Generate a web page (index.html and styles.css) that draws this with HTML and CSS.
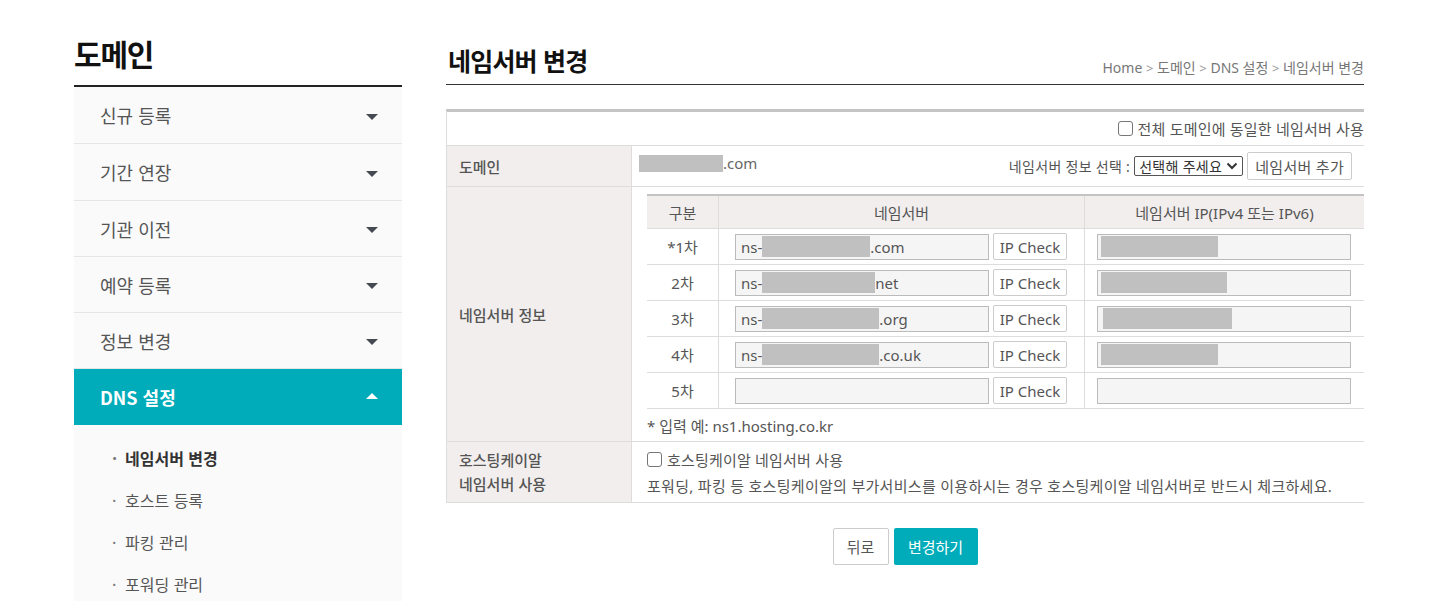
FILE: index.html
```html
<!DOCTYPE html>
<html lang="ko">
<head>
<meta charset="utf-8">
<title>네임서버 변경</title>
<link rel="stylesheet" href="styles.css">
</head>
<body>
<div class="page">
  <aside class="side">
    <h2 class="side-title">도메인</h2>
    <ul class="menu">
      <li class="menu-item tall"><span>신규 등록</span><i class="tri down"></i></li>
      <li class="menu-item tall"><span>기간 연장</span><i class="tri down"></i></li>
      <li class="menu-item"><span>기관 이전</span><i class="tri down"></i></li>
      <li class="menu-item"><span>예약 등록</span><i class="tri down"></i></li>
      <li class="menu-item"><span>정보 변경</span><i class="tri down"></i></li>
      <li class="menu-item active"><span>DNS 설정</span><i class="tri up"></i></li>
    </ul>
    <ul class="submenu">
      <li class="sub-item current">네임서버 변경</li>
      <li class="sub-item">호스트 등록</li>
      <li class="sub-item">파킹 관리</li>
      <li class="sub-item">포워딩 관리</li>
    </ul>
  </aside>
  <main class="main">
    <div class="head">
      <h1 class="title">네임서버 변경</h1>
      <div class="crumb">Home <span class="gt">&gt;</span> 도메인 <span class="gt">&gt;</span> DNS 설정 <span class="gt">&gt;</span> 네임서버 변경</div>
    </div>
    <div class="form">
      <div class="row-all">
        <label class="chk"><span class="box"></span>전체 도메인에 동일한 네임서버 사용</label>
      </div>
      <div class="row">
        <div class="lbl">도메인</div>
        <div class="val val-domain">
          <div class="dom"><span class="mask" style="width:84px"></span>.com</div>
          <div class="dom-tools">
            <span class="sel-lbl">네임서버 정보 선택 :</span>
            <span class="select">선택해 주세요 <svg width="12" height="8" viewBox="0 0 12 8"><path d="M1.5 1.5 L6 6 L10.5 1.5" fill="none" stroke="#333" stroke-width="2"/></svg></span>
            <span class="btn-add">네임서버 추가</span>
          </div>
        </div>
      </div>
      <div class="row">
        <div class="lbl lbl-mid">네임서버 정보</div>
        <div class="val val-ns">
          <div class="ns-table">
            <div class="th c1">구분</div>
            <div class="th c2">네임서버</div>
            <div class="th c3">네임서버 IP(IPv4 또는 IPv6)</div>

            <div class="td c1">*1차</div>
            <div class="td c2"><span class="inp">ns-<span class="mask" style="width:108px"></span>.com</span><span class="ipchk">IP Check</span></div>
            <div class="td c3"><span class="inp ip"><span class="mask m-ip" style="width:117px"></span></span></div>

            <div class="td c1">2차</div>
            <div class="td c2"><span class="inp">ns-<span class="mask" style="width:113px"></span>net</span><span class="ipchk">IP Check</span></div>
            <div class="td c3"><span class="inp ip"><span class="mask m-ip" style="width:126px"></span></span></div>

            <div class="td c1">3차</div>
            <div class="td c2"><span class="inp">ns-<span class="mask" style="width:117px"></span>.org</span><span class="ipchk">IP Check</span></div>
            <div class="td c3"><span class="inp ip"><span class="mask m-ip m-ip3" style="width:129px"></span></span></div>

            <div class="td c1">4차</div>
            <div class="td c2"><span class="inp">ns-<span class="mask" style="width:117px"></span>.co.uk</span><span class="ipchk">IP Check</span></div>
            <div class="td c3"><span class="inp ip"><span class="mask m-ip" style="width:117px"></span></span></div>

            <div class="td c1">5차</div>
            <div class="td c2"><span class="inp"></span><span class="ipchk">IP Check</span></div>
            <div class="td c3"><span class="inp ip"></span></div>
          </div>
          <p class="note">* 입력 예: ns1.hosting.co.kr</p>
        </div>
      </div>
      <div class="row">
        <div class="lbl lbl-two">호스팅케이알<br>네임서버 사용</div>
        <div class="val val-host">
          <label class="chk"><span class="box"></span>호스팅케이알 네임서버 사용</label>
          <p class="desc">포워딩, 파킹 등 호스팅케이알의 부가서비스를 이용하시는 경우 호스팅케이알 네임서버로 반드시 체크하세요.</p>
        </div>
      </div>
    </div>
    <div class="actions">
      <span class="btn back">뒤로</span>
      <span class="btn submit">변경하기</span>
    </div>
  </main>
</div>
</body>
</html>
```

FILE: styles.css
```css
* { box-sizing: border-box; }
html, body { margin: 0; padding: 0; background: #fff; }
body {
  font-family: "Noto Sans", "Noto Sans CJK KR", sans-serif;
  color: #555;
  font-size: 15px;
}
.page {
  display: flex;
  gap: 44px;
  padding-left: 74px;
  width: 1440px;
  height: 601px;
  overflow: hidden;
}
/* sidebar */
.side { width: 328px; flex: none; }
.side-title {
  margin: 0;
  padding-top: 32px;
  height: 87px;
  font-size: 30px;
  font-weight: 700;
  color: #111;
  line-height: 42px;
  letter-spacing: -1.2px;
  border-bottom: 2px solid #222;
  font-family: "Noto Sans CJK KR", sans-serif;
}
.menu, .submenu { list-style: none; margin: 0; padding: 0; }
.menu-item {
  height: 56px;
  background: #fafafa;
  border-bottom: 1px solid #e5e5e5;
  display: flex;
  align-items: center;
  justify-content: space-between;
  padding: 0 24px 0 26px;
  font-size: 18px;
  color: #555;
  font-family: "Noto Sans CJK KR", sans-serif;
}
.menu-item.tall { height: 57px; }
.menu-item.active {
  background: #00acb9;
  color: #fff;
  font-weight: 700;
  border-bottom: none;
  height: 56px;
}
.tri { display: block; width: 0; height: 0; border-left: 6px solid transparent; border-right: 6px solid transparent; }
.tri.down { border-top: 6px solid #454a52; margin-top: 3px; }
.tri.up { border-bottom: 6px solid #fff; margin-bottom: 3px; }
.submenu { background: #fafafa; padding-top: 19px; height: 200px; }
.sub-item {
  height: 42px;
  line-height: 28px;
  font-size: 16px;
  color: #555;
  padding-left: 51px;
  position: relative;
  font-family: "Noto Sans CJK KR", sans-serif;
}
.sub-item::before {
  content: "·";
  position: absolute;
  left: 38px;
  top: 0;
  color: #777;
}
.sub-item.current { font-weight: 700; color: #333; }

/* main */
.main { width: 918px; flex: none; }
.head {
  display: flex;
  justify-content: space-between;
  align-items: flex-end;
  height: 85px;
  border-bottom: 1px solid #333;
  padding-bottom: 6px;
}
.title {
  margin: 0 0 0 2px;
  font-size: 25px;
  font-weight: 700;
  color: #111;
  line-height: 36px;
  letter-spacing: -0.8px;
  font-family: "Noto Sans CJK KR", sans-serif;
}
.crumb { font-size: 14px; color: #777; line-height: 20px; padding-bottom: 0; }
.gt { color: #999; font-size: 13px; }

.form {
  margin-top: 24px;
  border-top: 3px solid #c4c4c4;
  border-left: 1px solid #ddd;
}
.row-all {
  height: 34px;
  border-bottom: 1px solid #ddd;
  display: flex;
  justify-content: flex-end;
  align-items: center;
}
.chk { display: inline-flex; align-items: center; gap: 5px; color: #555; font-size: 15px; letter-spacing: 0.2px; }
.box {
  width: 15px; height: 15px;
  border: 1px solid #767676;
  border-radius: 3px;
  background: #fff;
  display: inline-block;
}
.row {
  display: flex;
  border-bottom: 1px solid #ddd;
}
.lbl {
  width: 185px;
  flex: none;
  background: #f1eeed;
  border-right: 1px solid #ddd;
  padding: 0 12px;
  font-size: 15px;
  font-weight: 500;
  color: #555;
  display: flex;
  align-items: center;
  font-family: "Noto Sans CJK KR", sans-serif;
}
.lbl-two { line-height: 24px; }
.val { flex: 1; min-width: 0; }
.val-domain {
  height: 40px;
  display: flex;
  justify-content: space-between;
  align-items: center;
  padding: 0 12px 0 7px;
}
.dom { display: flex; align-items: center; color: #666; font-size: 15px; margin-top: -6px; }
.mask { display: inline-block; background: #c0c0c0; height: 19px; vertical-align: middle; }
.dom .mask { height: 17px; }
.dom-tools { display: flex; align-items: center; font-size: 14px; color: #555; letter-spacing: 0.3px; }
.sel-lbl { margin-right: 4px; }
.select {
  display: inline-flex; align-items: center; gap: 4px;
  height: 20px; border: 1px solid #555; border-radius: 2px;
  padding: 0 4px; font-size: 14px; color: #333; margin-right: 4px;
}
.btn-add {
  height: 28px; padding: 0 7px; border: 1px solid #ccc; border-radius: 2px;
  display: inline-flex; align-items: center; font-size: 15px; color: #555;
  background: #fff;
}
.val-ns { padding: 7px 0 0 15px; }
.ns-table {
  display: grid;
  grid-template-columns: 72px 366px 1fr;
  border-top: 2px solid #c4c4c4;
}
.th {
  height: 33px;
  background: #f1eeed;
  display: flex; align-items: center; justify-content: center;
  font-size: 15px; color: #555;
  border-bottom: 1px solid #ddd;
}
.th.c1, .td.c1 { border-right: 1px solid #ddd; }
.th.c2, .td.c2 { border-right: 1px solid #ddd; }
.td {
  height: 36px;
  border-bottom: 1px solid #ddd;
  display: flex; align-items: center;
  font-size: 15px; color: #555;
}
.td.c1 { justify-content: center; }
.td.c2 { padding-left: 16px; gap: 4px; }
.td.c3 { padding-left: 12px; }
.inp {
  width: 254px; height: 26px;
  border: 1px solid #bbb;
  background: #f5f5f5;
  display: inline-flex; align-items: center;
  padding-left: 5px;
  font-size: 15px; color: #555;
}
.inp .mask { height: 21px; }
.inp.ip { width: 254px; padding-left: 3px; }
.m-ip { height: 19px; }
.m-ip3 { margin-left: 2px; }
.ipchk {
  width: 74px; height: 27px;
  border: 1px solid #ccc; border-radius: 2px;
  display: inline-flex; align-items: center; justify-content: center;
  font-size: 15px; color: #555; background: #fff;
}
.note { margin: 0; height: 32px; line-height: 34px; font-size: 15px; color: #555; }
.val-host { padding: 6px 15px 0 15px; height: 60px; }
.val-host .chk { height: 22px; }
.desc { margin: 4px 0 0; font-size: 15px; color: #555; line-height: 22px; letter-spacing: 0.3px; }
.actions {
  display: flex; justify-content: center; gap: 5px;
  margin-top: 25px;
}
.btn {
  height: 37px; display: inline-flex; align-items: center; justify-content: center;
  border-radius: 2px; font-size: 15px;
}
.btn.back { width: 56px; border: 1px solid #ccc; color: #555; background: #fff; }
.btn.submit { width: 84px; background: #00acb9; color: #fff; }
```
